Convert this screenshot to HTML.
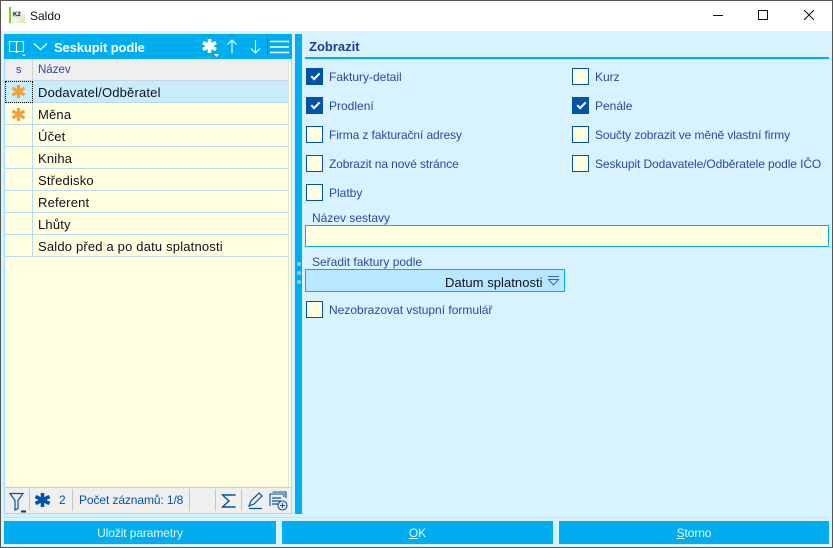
<!DOCTYPE html>
<html><head><meta charset="utf-8"><style>
html,body{margin:0;padding:0;width:833px;height:548px;overflow:hidden;background:#d9f2ff;font-family:"Liberation Sans",sans-serif;}
.a{position:absolute;white-space:nowrap;}
.t{font-size:12px;letter-spacing:-.1px;color:#2a4a9a;}
.r{font-size:13px;letter-spacing:.18px;color:#101020;line-height:23px;}
.cb{position:absolute;width:15px;height:15px;border:1px solid #0054a6;background:#ffffe0;}
.cb.c{background:#0054a6;}
.cb.c:after{content:"";position:absolute;left:4px;top:4px;width:7px;height:3px;border-left:2px solid #fff;border-bottom:2px solid #fff;transform:rotate(-45deg);}
.btn{position:absolute;top:521px;height:23px;background:#00aeef;color:#e8f8ff;font-size:12px;letter-spacing:-.1px;line-height:24px;text-align:center;}
.row{position:absolute;left:5px;width:283px;height:21px;background:#ffffe0;border-bottom:1px solid #b9dcea;}
.row i{position:absolute;left:27px;top:0;width:1px;height:22px;background:#b9dcea;}
.row span{position:absolute;left:33px;top:0;}
</style></head><body>
<div class="a" style="left:0;top:0;width:833px;height:31px;background:#fff;"></div>
<div class="a" style="left:0;top:0;width:833px;height:1px;background:#555;"></div>
<div class="a" style="left:832px;top:0;width:1px;height:548px;background:#555;"></div>
<div class="a" style="left:0;top:0;width:1px;height:548px;background:#555;"></div>
<div class="a" style="left:0;top:547px;width:833px;height:1px;background:#555;"></div>

<div class="a" style="left:9px;top:7px;width:16px;height:16px;background:linear-gradient(135deg,#fff 40%,#cfe8a0);border-left:2px solid #7ccf2e;box-sizing:border-box;"></div>
<div class="a" style="left:12px;top:12px;width:9px;height:6px;background:#ddd;"></div>
<div class="a" style="left:13px;top:12px;font-size:6px;line-height:6px;font-weight:bold;color:#222;">K2</div>
<div class="a" style="left:30px;top:9px;font-size:12px;letter-spacing:0;color:#111;">Saldo</div>
<svg class="a" style="left:700px;top:0;" width="133" height="31" fill="none" stroke="#111" stroke-width="1">
<path d="M13 15.5H23"/><rect x="58.5" y="10.5" width="9" height="9"/><path d="M104 10L114 20M114 10L104 20"/></svg>

<!-- left panel -->
<div class="a" style="left:4px;top:34px;width:288px;height:480px;background:#ffffe0;border:1px solid #9fdcf5;box-sizing:border-box;"></div>
<div class="a" style="left:4px;top:34px;width:288px;height:25px;background:#00aeef;"></div>
<svg class="a" style="left:4px;top:34px;" width="288" height="25" fill="none" stroke="#fff" stroke-width="1.1">
<path d="M5.5 7.5H11Q12.5 7.5 12.5 9V19Q12.5 17.5 11 17.5H5.5ZM12.5 9Q12.5 7.5 14 7.5H19.5V17.5H14Q12.5 17.5 12.5 19"/>
<path d="M18 20.5H22L20 22.5Z" fill="#fff" stroke="none"/>
<path d="M30 9.5L36.5 15.5L43 9.5" stroke-width="1.2"/>
<path d="M228 6V19M223.5 10.5L228 6L232.5 10.5M251.5 6V19M247 14.5L251.5 19L256 14.5" stroke-width="1.1"/>
<path d="M263.5 2V22" stroke="#0a86c4"/>
<path d="M266 7.5H285M266 13H285M266 18.5H285" stroke-width="1.5"/>
<path d="M205.5 5V19M199 8.5L212 15.5M212 8.5L199 15.5" stroke-width="3.6"/>
<path d="M210 20H215L212.5 23Z" fill="#fff" stroke="none"/>
</svg>
<div class="a" style="left:54px;top:40px;font-size:13px;font-weight:bold;letter-spacing:-.12px;color:#fff;">Seskupit podle</div>

<div class="a" style="left:5px;top:59px;width:283px;height:21px;background:#efefef;border-bottom:1px solid #c4d6de;"></div>
<div class="a" style="left:32px;top:59px;width:1px;height:21px;background:#c8d8e0;"></div>
<div class="a t" style="left:16px;top:64px;font-size:11px;">s</div>
<div class="a t" style="left:38px;top:64px;font-size:11.5px;letter-spacing:0;">Název</div>
<div class="a" style="left:288px;top:59px;width:1px;height:428px;background:#d8e8d0;"></div>

<div class="row r" style="top:81px;background:#c9ecfa;"><i></i><span>Dodavatel/Odběratel</span></div>
<div class="a" style="left:5px;top:81px;width:26px;height:20px;border:1px dotted #111;"></div>
<div class="row r" style="top:103px;"><i></i><span>Měna</span></div>
<div class="row r" style="top:125px;"><i></i><span>Účet</span></div>
<div class="row r" style="top:147px;"><i></i><span>Kniha</span></div>
<div class="row r" style="top:169px;"><i></i><span>Středisko</span></div>
<div class="row r" style="top:191px;"><i></i><span>Referent</span></div>
<div class="row r" style="top:213px;"><i></i><span>Lhůty</span></div>
<div class="row r" style="top:235px;"><i></i><span>Saldo před a po datu splatnosti</span></div>
<svg class="a" style="left:11px;top:84px;" width="16" height="40" fill="none" stroke="#f7a035" stroke-width="3.2">
<path d="M7.5 1V14M1.5 4L13.5 11M13.5 4L1.5 11"/>
<path d="M7.5 24V37M1.5 27L13.5 34M13.5 27L1.5 34"/></svg>

<!-- status bar -->
<div class="a" style="left:5px;top:487px;width:286px;height:26px;background:#efefef;border-top:1px solid #9fdcf5;box-sizing:border-box;"></div>
<svg class="a" style="left:0;top:487px;" width="292" height="27" fill="none" stroke="#0054a6">
<path d="M10 6.5H23L18 13.5V21.5L15 23V13.5Z" stroke-width="1.2"/>
<path d="M21 24.5H26" stroke-width="2" stroke="#333"/>
<path d="M42.5 6V20M35.5 9.5L49.5 16.5M49.5 9.5L35.5 16.5" stroke-width="3.6"/>
<g stroke="#c5c5c5"><path d="M29.5 2V24M72.5 2V24M189.5 2V24M215.5 2V24M241.5 2V24"/></g>
<path d="M235 8.5V8H222.5L229 14L222.5 20H235V19.5" stroke-width="1.4"/>
<path d="M249 19L251 14L259 6L262 9L254 17ZM249 21.5H262" stroke-width="1.2"/>
<path d="M270 19V7H284V10M272.5 5H286V11" stroke-width="1.1"/>
<path d="M272 11H281M272 14H281M272 17H278" stroke-width="1.2"/>
<circle cx="282.5" cy="18.5" r="4.5" fill="#efefef" stroke-width="1.1"/>
<path d="M280 18.5H285M282.5 16V21" stroke-width="1.1"/>
</svg>
<div class="a" style="left:59px;top:493px;font-size:12px;letter-spacing:0;color:#0054a6;">2</div>
<div class="a" style="left:79px;top:493px;font-size:12px;letter-spacing:-.1px;color:#0054a6;">Počet záznamů: 1/8</div>

<!-- splitter -->
<div class="a" style="left:295px;top:34px;width:7px;height:480px;background:#00aeef;"></div>
<div class="a" style="left:297px;top:262px;width:4px;height:4px;border-radius:2px;background:#7fd4f5;"></div>
<div class="a" style="left:297px;top:271px;width:4px;height:4px;border-radius:2px;background:#7fd4f5;"></div>
<div class="a" style="left:297px;top:280px;width:4px;height:4px;border-radius:2px;background:#7fd4f5;"></div>

<!-- right -->
<div class="a" style="left:309px;top:39px;font-size:13px;font-weight:bold;letter-spacing:0;color:#1a3f94;">Zobrazit</div>
<div class="a" style="left:305px;top:57px;width:524px;height:2px;background:#00aeef;"></div>

<div class="cb c" style="left:306px;top:68px;"></div><div class="a t" style="left:329px;top:70px;letter-spacing:0;">Faktury-detail</div>
<div class="cb c" style="left:306px;top:97px;"></div><div class="a t" style="left:329px;top:99px;letter-spacing:0;">Prodlení</div>
<div class="cb" style="left:306px;top:126px;"></div><div class="a t" style="left:329px;top:128px;">Firma z fakturační adresy</div>
<div class="cb" style="left:306px;top:155px;"></div><div class="a t" style="left:329px;top:157px;">Zobrazit na nové stránce</div>
<div class="cb" style="left:306px;top:184px;"></div><div class="a t" style="left:329px;top:186px;letter-spacing:0;">Platby</div>
<div class="cb" style="left:572px;top:68px;"></div><div class="a t" style="left:595px;top:70px;letter-spacing:0;">Kurz</div>
<div class="cb c" style="left:572px;top:97px;"></div><div class="a t" style="left:595px;top:99px;letter-spacing:0;">Penále</div>
<div class="cb" style="left:572px;top:126px;"></div><div class="a t" style="left:595px;top:128px;">Součty zobrazit ve měně vlastní firmy</div>
<div class="cb" style="left:572px;top:155px;"></div><div class="a t" style="left:595px;top:157px;">Seskupit Dodavatele/Odběratele podle IČO</div>

<div class="a t" style="left:312px;top:211px;letter-spacing:0;">Název sestavy</div>
<div class="a" style="left:305px;top:225px;width:524px;height:22px;background:#ffffe0;border:1px solid #00aeef;box-sizing:border-box;"></div>
<div class="a t" style="left:312px;top:255px;letter-spacing:0;">Seřadit faktury podle</div>
<div class="a" style="left:305px;top:269px;width:260px;height:23px;background:#b8e8ff;border:1px solid #00aeef;box-sizing:border-box;"></div>
<div class="a" style="left:445px;top:275px;font-size:13px;letter-spacing:.05px;color:#101020;">Datum splatnosti</div>
<svg class="a" style="left:547px;top:275px;" width="14" height="12" fill="none" stroke="#2a6db5"><path d="M1 1.5H12M1.5 4.5H11.5L6.5 10Z"/></svg>
<div class="cb" style="left:306px;top:301px;"></div><div class="a t" style="left:329px;top:303px;letter-spacing:0;">Nezobrazovat vstupní formulář</div>

<div class="a" style="left:4px;top:517px;width:825px;height:1px;background:#b8e8fa;"></div>
<div class="btn" style="left:4px;width:272px;">Uložit parametry</div>
<div class="btn" style="left:282px;width:271px;"><u>O</u>K</div>
<div class="btn" style="left:559px;width:270px;"><u>S</u>torno</div>
</body></html>
